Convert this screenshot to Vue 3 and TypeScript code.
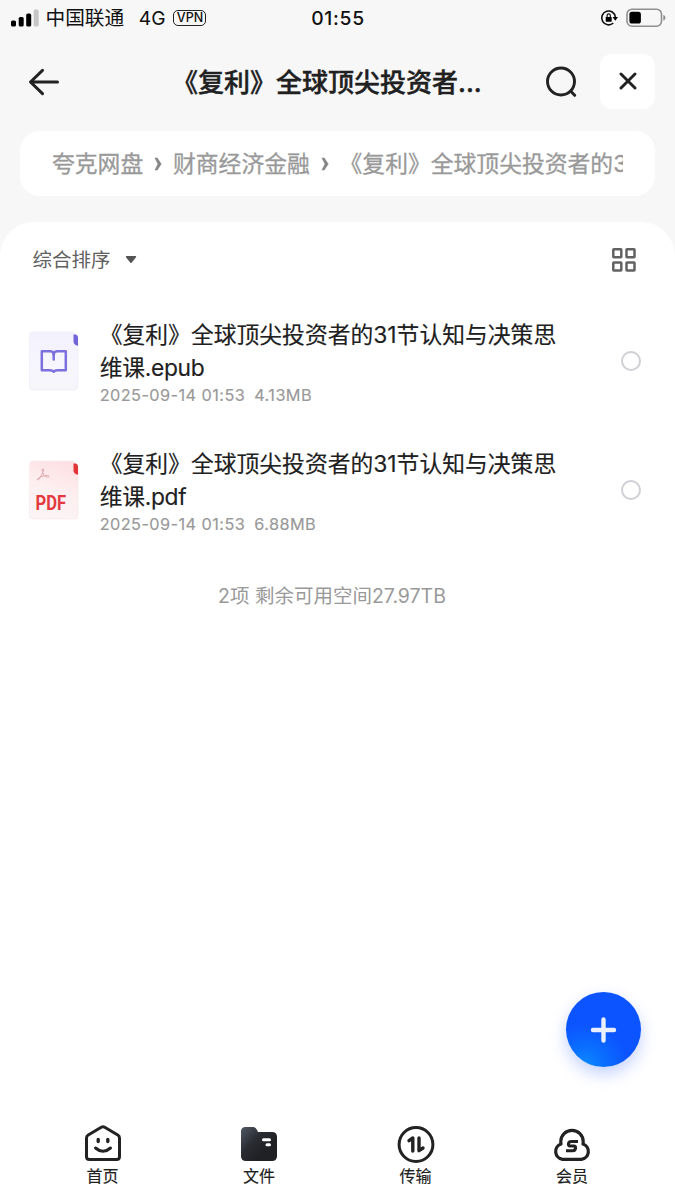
<script setup lang="ts">
interface FileItem {
  kind: 'epub' | 'pdf'
  lines: string[]
  date: string
  size: string
}

const crumbs: string[] = ['夸克网盘', '财商经济金融', '《复利》全球顶尖投资者的31节认知与决策思维课']

const files: FileItem[] = [
  { kind: 'epub', lines: ['《复利》全球顶尖投资者的31节认知与决策思', '维课.epub'], date: '2025-09-14 01:53', size: '4.13MB' },
  { kind: 'pdf', lines: ['《复利》全球顶尖投资者的31节认知与决策思', '维课.pdf'], date: '2025-09-14 01:53', size: '6.88MB' },
]

const tabs = [
  { id: 'home', label: '首页' },
  { id: 'files', label: '文件' },
  { id: 'transfer', label: '传输' },
  { id: 'member', label: '会员' },
]
</script>

<template>
  <div class="screen">
    <header class="status">
      <div class="status-left">
        <svg class="signal" width="28" height="18" viewBox="0 0 28 18">
          <rect x="0" y="11.5" width="5" height="6" rx="1.6" />
          <rect x="7.7" y="8" width="5" height="9.500" rx="1.6" />
          <rect x="15.200" y="4.500" width="5" height="13" rx="1.6" />
          <rect x="22.700" y="0.500" width="5" height="17" rx="1.6" fill="#c6c6c6" />
        </svg>
        <span class="carrier">中国联通</span>
        <span class="network">4G</span>
        <span class="vpn">VPN</span>
      </div>
      <div class="clock">01:55</div>
      <div class="status-right">
        <svg width="18" height="18" viewBox="0 0 18 18">
          <path d="M13.300 14A6.900 6.900 0 1 1 15.500 8.500" fill="none" stroke="#111" stroke-width="1.600" />
          <path d="M12.600 8h5.400l-2.700 3.700z" />
          <rect x="5.700" y="7.900" width="6" height="4.900" rx="0.700" />
          <path d="M7.100 8V6.500a1.600 1.600 0 0 1 3.200 0V8" fill="none" stroke="#111" stroke-width="1.200" />
        </svg>
        <svg width="40" height="20" viewBox="0 0 40 20">
          <rect x="1" y="1.200" width="34.500" height="17" rx="5" fill="none" stroke="#8f8f8f" stroke-width="1.600" />
          <rect x="3.400" y="3.800" width="11.500" height="11.800" rx="2.600" />
          <path d="M37.300 6.800q2.200 1 2.200 3t-2.200 3z" fill="#8f8f8f" />
        </svg>
      </div>
    </header>

    <nav class="titlebar">
      <svg class="back" width="32" height="28" viewBox="0 0 32 28">
        <path d="M14.500 2.400L2.500 14l12 11.600M3 14h26.500" fill="none" stroke="#222" stroke-width="3" stroke-linecap="round" stroke-linejoin="round" />
      </svg>
      <h1 class="title">《复利》全球顶尖投资者...</h1>
      <svg class="search" width="34" height="34" viewBox="0 0 34 34">
        <circle cx="16" cy="16.500" r="13.500" fill="none" stroke="#222" stroke-width="2.900" />
        <path d="M25.500 26l4.200 4.300" stroke="#222" stroke-width="3" stroke-linecap="round" />
      </svg>
      <button class="close">
        <svg width="18" height="18" viewBox="0 0 18 18">
          <path d="M2 2l14 14M16 2L2 16" stroke="#222" stroke-width="2.900" stroke-linecap="round" />
        </svg>
      </button>
    </nav>

    <div class="crumb-card">
      <div class="crumbs">
        <template v-for="(c, i) in crumbs" :key="c">
          <svg v-if="i > 0" class="chev" width="8" height="14" viewBox="0 0 8 14">
            <path d="M1 1H3.200L7.200 7L3.200 13H1L4 7Z" fill="#858585" stroke="#858585" stroke-width="0.600" stroke-linejoin="round" />
          </svg>
          <span>{{ c }}</span>
        </template>
      </div>
    </div>

    <main class="panel">
      <div class="sort">
        <div class="sort-by">
          <span>综合排序</span>
          <svg width="12" height="9" viewBox="0 0 12 9">
            <path d="M1.600 1.800H10.400L6 7.200Z" fill="#555" stroke="#555" stroke-width="1.600" stroke-linejoin="round" />
          </svg>
        </div>
        <svg width="26" height="26" viewBox="0 0 26 26" fill="none" stroke="#626262" stroke-width="2.500">
          <rect x="2.300" y="2.300" width="8" height="8" rx="0.500" />
          <rect x="15.500" y="2.300" width="8" height="8" rx="0.500" />
          <rect x="2.300" y="15.500" width="8" height="8" rx="0.500" />
          <rect x="15.500" y="15.500" width="8" height="8" rx="0.500" />
        </svg>
      </div>

      <ul class="list">
        <li v-for="f in files" :key="f.kind" class="row">
          <svg class="thumb" width="50" height="60" viewBox="0 0 50 60">
            <defs>
              <linearGradient id="epub-bg" x1="0" y1="0" x2="0" y2="1">
                <stop offset="0" stop-color="#f3f1fe" />
                <stop offset="0.600" stop-color="#f7f6fd" />
                <stop offset="1" stop-color="#f5f5fa" />
              </linearGradient>
              <linearGradient id="pdf-bg" x1="0.700" y1="0" x2="0.400" y2="1">
                <stop offset="0" stop-color="#fde0e3" />
                <stop offset="0.550" stop-color="#fdf0f1" />
                <stop offset="1" stop-color="#fbf4f5" />
              </linearGradient>
            </defs>
            <path d="M4 1H44L49 5V56Q49 59 46 59H3Q0.500 59 0.500 56V4Q0.500 1 4 1Z" :fill="`url(#${f.kind}-bg)`" :stroke="f.kind === 'pdf' ? '#f7eaec' : '#eeedf6'" stroke-width="0.700" />
            <template v-if="f.kind === 'epub'">
              <path d="M44.500 3.500H46.500Q49 4 49 7V14.800Q44.500 14 44.500 10.500Z" fill="#7365d8" />
              <path d="M12.800 20.300H21.500Q24.700 20.500 24.700 23.500Q24.700 20.500 28 20.300H36.800V39.300H28.700Q25.700 39.300 24.700 40.700Q23.700 39.300 20.700 39.300H12.800Z" fill="none" stroke="#7b70de" stroke-width="2.500" stroke-linejoin="round" />
              <path d="M24.700 22.500V28.500" stroke="#7b70de" stroke-width="2.500" stroke-linecap="round" />
            </template>
            <template v-else>
              <path d="M44.500 3.500H46.500Q49 4 49 7V14.800Q44.500 14 44.500 10.500Z" fill="#e33437" />
              <path d="M13.900 8.800c-1.500 0-.6 3.300.4 5.200c1 2 2.700 3.200 4.500 3.200c1.900-.2 1.300-1.700-.8-1.700c-3.300 0-7 1.500-9 3c-1.700 1.400-.3 2.100 1 .5c2.100-2.500 4.800-7.500 4.600-9.300q-.1-.9-.7-.9z" fill="none" stroke="#dfa9af" stroke-width="1" />
              <text class="pdf-word" x="6.600" y="49.600" textLength="30.500" lengthAdjust="spacingAndGlyphs">PDF</text>
            </template>
          </svg>
          <div class="info">
            <div v-for="l in f.lines" :key="l" class="name">{{ l }}</div>
            <div class="meta"><span>{{ f.date }}</span><span>{{ f.size }}</span></div>
          </div>
          <span class="radio"></span>
        </li>
      </ul>

      <p class="summary">2项 剩余可用空间27.97TB</p>
    </main>

    <button class="fab">
      <svg width="28" height="28" viewBox="0 0 28 28">
        <path d="M13.500 3.500v21M3 14h21" stroke="#e9efff" stroke-width="4.400" stroke-linecap="round" />
      </svg>
    </button>

    <footer class="tabs">
      <div v-for="t in tabs" :key="t.id" class="tab">
        <svg width="40" height="40" viewBox="0 0 40 40">
          <g v-if="t.id === 'home'" fill="none" stroke="#222" stroke-width="3" stroke-linecap="round" stroke-linejoin="round">
            <path d="M18.300 3.300Q20 2.300 21.700 3.300L34.800 11Q36.500 12 36.500 14V32.500Q36.500 35.500 33.500 35.500H6.500Q3.500 35.500 3.500 32.500V14Q3.500 12 5.200 11Z" />
            <path d="M15.200 15.500v2M24.800 15.500v2" stroke-width="3.400" />
            <path d="M12.500 24Q20 30.500 27.500 24" />
          </g>
          <g v-else-if="t.id === 'files'">
            <defs>
              <linearGradient id="folder" x1="0" y1="0.100" x2="0.650" y2="0.700">
                <stop offset="0" stop-color="#4c535f" />
                <stop offset="0.550" stop-color="#292b31" />
                <stop offset="1" stop-color="#202125" />
              </linearGradient>
            </defs>
            <path d="M6.500 3H13.500Q16.500 3 17.700 5.600L19 8H33Q38 8 38 13V32Q38 37 33 37H7Q2 37 2 32V7.500Q2 3 6.500 3Z" fill="url(#folder)" />
            <path d="M24.500 15.800H30.500M28 20.800H30.500" stroke="#fff" stroke-width="3" stroke-linecap="round" />
          </g>
          <g v-else-if="t.id === 'transfer'" fill="none" stroke="#222" stroke-width="3" stroke-linecap="round" stroke-linejoin="round">
            <circle cx="20" cy="20.500" r="16.900" />
            <path d="M13 16.700L16.800 14V27" stroke-width="3.400" />
            <path d="M23 14V26.700L27 24" stroke-width="3.400" />
          </g>
          <g v-else fill="none" stroke="#222" stroke-width="3.200" stroke-linecap="round" stroke-linejoin="round">
            <path d="M10.500 35.300A7.900 7.900 0 0 1 9 20Q8.800 19 8.800 17.600A11.200 11.200 0 0 1 31.200 17.600Q31.200 19 31 20A7.900 7.900 0 0 1 29.500 35.300Z" />
            <path d="M26 17.500H19.200Q17 17.500 16.500 19.600T18.200 22H21.800Q24 22 23.500 24.300T20.800 26.700H14" stroke-width="3.100" stroke-linecap="butt" />
          </g>
        </svg>
        <span>{{ t.label }}</span>
      </div>
    </footer>
  </div>
</template>

<style>
body {
  background: #fff;
}
</style>

<style scoped>
.screen {
  position: relative;
  display: flex;
  flex-direction: column;
  width: 675px;
  height: 1200px;
  overflow: hidden;
  background: #f7f7f8;
  color: #202020;
  font-family: Inter, "Noto Sans CJK SC", sans-serif;
  white-space: nowrap;
}
button {
  padding: 0;
  border: 0;
}
svg {
  display: block;
  flex: none;
}
.status {
  display: grid;
  grid-template-columns: 1fr auto 1fr;
  align-items: center;
  height: 34px;
  padding: 0 9px 0 11px;
  color: #111;
}
.status-left,
.status-right {
  display: flex;
  align-items: center;
}
.signal {
  margin-top: -1px;
}
.carrier {
  margin-left: 6.500px;
  font-size: 19.700px;
  line-height: 36px;
}
.network {
  margin-left: 14.500px;
  font-size: 19.200px;
}
.vpn {
  box-sizing: border-box;
  width: 33px;
  height: 16px;
  margin: -1px 0 0 8px;
  border: 1.500px solid #222;
  border-radius: 5px;
  font-size: 12.500px;
  font-weight: 500;
  line-height: 13px;
  text-align: center;
}
.clock {
  margin-right: 1px;
  font-size: 19.300px;
  font-weight: 500;
  letter-spacing: 0.700px;
}
.status-right {
  justify-content: flex-end;
  gap: 8px;
}
.titlebar {
  display: flex;
  align-items: center;
  height: 56px;
  margin-top: 19px;
  padding: 0 20px 0 28px;
}
.back {
  margin-top: 1px;
}
.title {
  width: 312px;
  margin: 4px 0 0 112px;
  font-size: 26px;
  font-weight: 500;
  line-height: 56px;
  -webkit-text-stroke: 0.400px #202020;
}
.search {
  margin: 1px 0 0 61px;
}
.close {
  display: grid;
  place-items: center;
  width: 55px;
  height: 55px;
  margin-left: auto;
  border-radius: 12px;
  background: #fff;
}
.crumb-card {
  height: 65px;
  margin: 22px 20px 0;
  padding: 0 32px;
  border-radius: 20px;
  background: #fff;
}
.crumbs {
  display: flex;
  align-items: center;
  overflow: hidden;
  height: 65px;
  color: #999;
  font-size: 22.800px;
  -webkit-text-stroke: 0.300px #999;
}
.crumbs span {
  flex: none;
  margin-top: -2px;
}
.chev {
  margin: 0 11px 0 10.800px;
}
.panel {
  flex: 1;
  margin-top: 26px;
  border-radius: 34px 34px 0 0;
  background: #fff;
}
.sort {
  display: flex;
  align-items: center;
  justify-content: space-between;
  height: 75px;
  padding: 0 38px 0 32.500px;
}
.sort-by {
  display: flex;
  align-items: center;
  gap: 14px;
  color: #606060;
  font-size: 19.500px;
}
.sort-by span {
  margin-top: -2px;
}
.list {
  margin: 0;
  padding: 21px 34px 0 28px;
  list-style: none;
}
.row {
  display: flex;
  height: 129px;
}
.thumb {
  margin: 13px 21px 0 1px;
}
.pdf-word {
  fill: #e33a40;
  font: 700 19.500px Roboto, sans-serif;
}
.info {
  flex: 1;
  margin-left: -0.300px;
}
.name {
  height: 33px;
  font-size: 22.800px;
  line-height: 33px;
  -webkit-text-stroke: 0.150px #202020;
}
.name + .name {
  letter-spacing: -0.300px;
}
.meta {
  display: flex;
  gap: 9px;
  color: #999;
  font-size: 16.300px;
  letter-spacing: 0.430px;
  line-height: 22px;
  -webkit-text-stroke: 0.150px #999;
}
.radio {
  box-sizing: border-box;
  width: 20px;
  height: 20px;
  margin-top: 33px;
  border: 2px solid #cfcfd6;
  border-radius: 50%;
}
.summary {
  width: 664px;
  margin: 5px 0 0;
  color: #999;
  font-size: 19.500px;
  line-height: 30px;
  text-align: center;
}
.fab {
  position: absolute;
  top: 992px;
  left: 566px;
  display: grid;
  place-items: center;
  width: 75px;
  height: 75px;
  border-radius: 50%;
  background: radial-gradient(circle at 25% 100%, #0a8cff 0, #0a70ff 20%, #0c54ff 46%);
  box-shadow: 0 7px 16px rgba(30, 80, 255, 0.260);
}
.tabs {
  display: grid;
  grid-template-columns: repeat(4, 156.500px);
  height: 76px;
  padding-left: 24.300px;
  background: #fff;
}
.tab {
  display: flex;
  flex-direction: column;
  align-items: center;
  font-size: 16px;
  line-height: 24px;
  -webkit-text-stroke: 0.150px #202020;
}
</style>
